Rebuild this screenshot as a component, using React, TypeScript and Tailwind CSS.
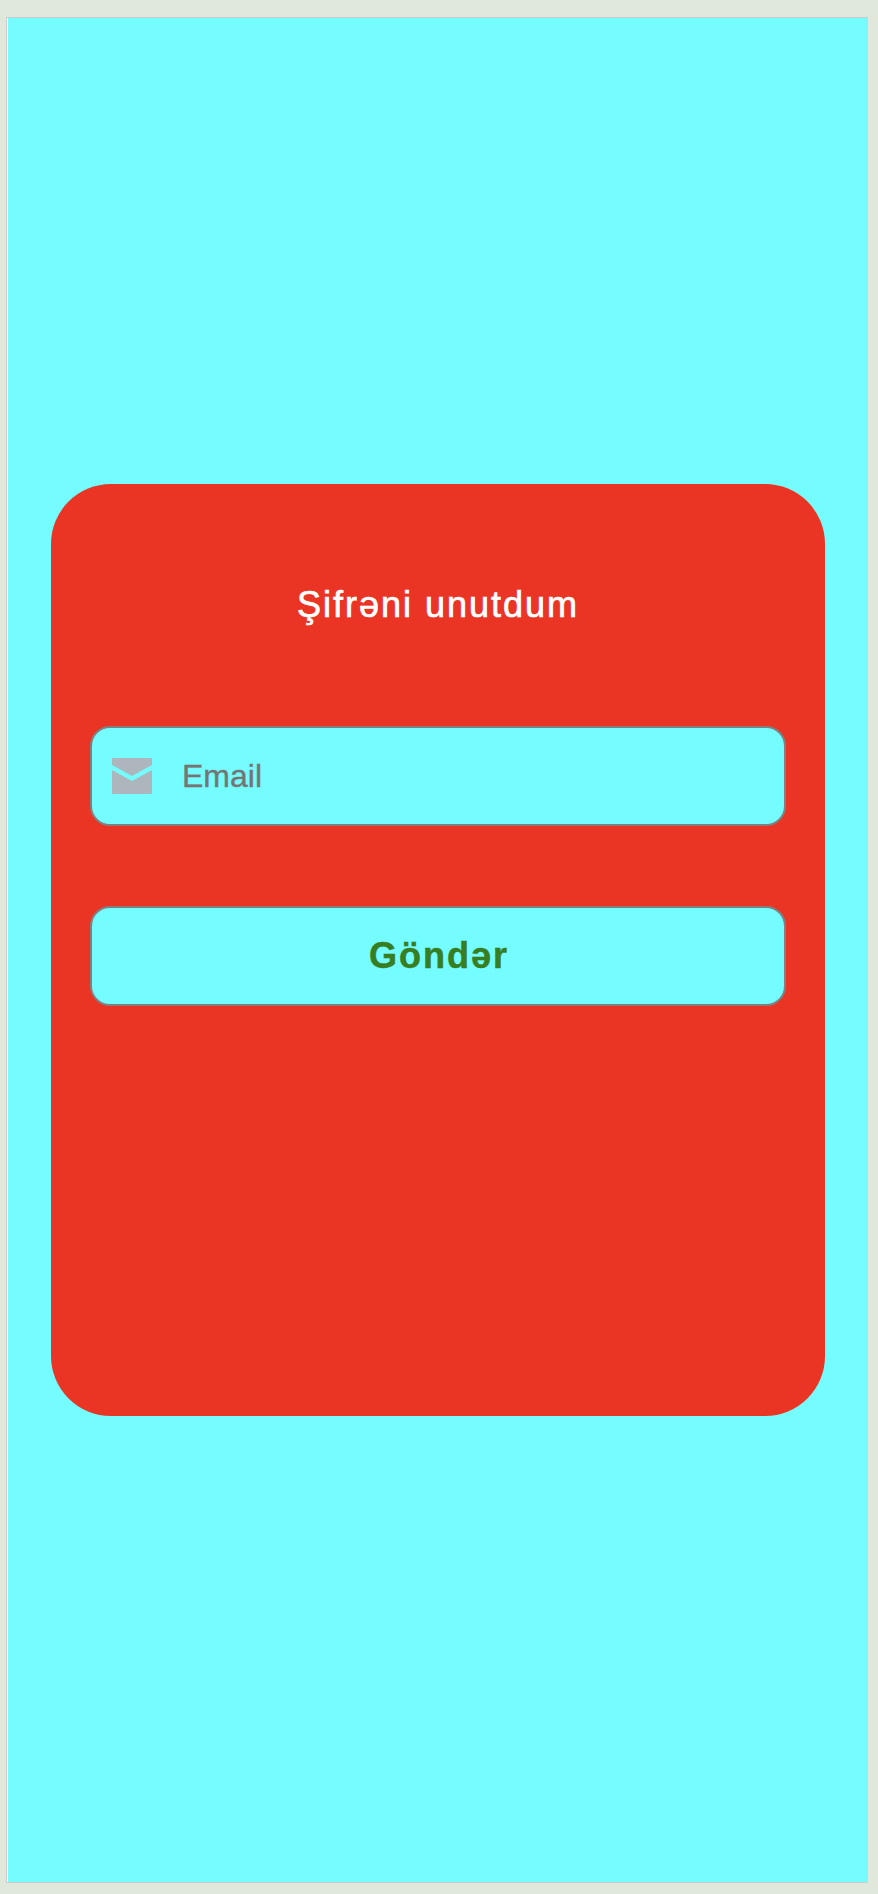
import React from "react";

function MailIcon() {
  return (
    <svg width="40" height="36" viewBox="0 0 40 36" fill="#adb5bd" aria-hidden="true">
      <path d="M1 0H39Q40 0 40 1V7L20 18.1L0 7V1Q0 0 1 0Z" />
      <path d="M0 12L20 23.1L40 12V35Q40 36 39 36H1Q0 36 0 35Z" />
    </svg>
  );
}

export default function App() {
  return (
    <div className="h-[1894px] w-[878px] bg-[#e0e8dc] pt-[17px] pl-[6px] font-['Liberation_Sans',Arial,sans-serif]">
      <main className="flex h-[1866px] w-[862px] items-center justify-center border border-r-0 border-[#cccccc] bg-[#75fcfe] pl-px shadow-[inset_1px_0_0_#ffffff]">
        <form
          className="flex h-[932px] w-[774px] flex-col rounded-[60px] bg-[#ea3424] px-[39px]"
          onSubmit={(e) => e.preventDefault()}
        >
          <h1 className="mt-[100px] h-[42px] text-center text-[36px] leading-[42px] font-normal tracking-[2px] text-white [-webkit-text-stroke:0.7px_#ffffff]">
            Şifrəni unutdum
          </h1>
          <label className="mt-[100px] flex h-[100px] items-center gap-[30px] rounded-[20px] border-2 border-[#808080] bg-[#75fcfe] pl-[20px]">
            <MailIcon />
            <input
              type="email"
              placeholder="Email"
              className="h-[40px] flex-1 bg-transparent text-[32px] leading-[40px] outline-none placeholder:text-[#757575] placeholder:[-webkit-text-stroke:0.4px_#757575]"
            />
          </label>
          <button className="mt-[80px] h-[100px] rounded-[20px] border-2 border-[#808080] bg-[#75fcfe] pl-[2px] text-[36px] leading-[42px] font-bold tracking-[2px] text-[#377e22] [-webkit-text-stroke:0.5px_#377e22]">
            Göndər
          </button>
        </form>
      </main>
    </div>
  );
}
